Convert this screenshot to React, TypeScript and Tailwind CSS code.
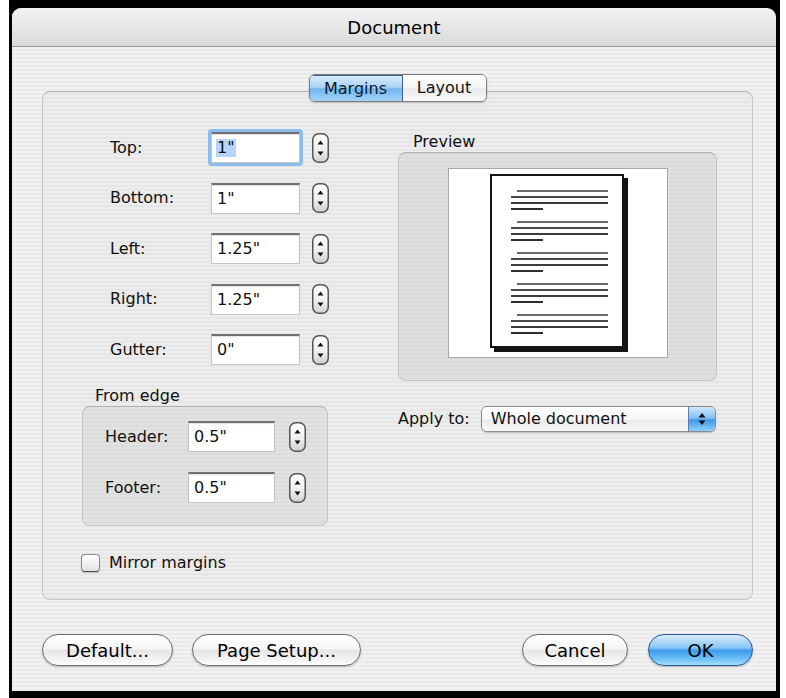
import React from 'react';

const stripes =
  'bg-[repeating-linear-gradient(to_bottom,#f1f1f1_0px,#f1f1f1_2px,#eaeaea_2px,#eaeaea_4px)]';

function Stepper() {
  return (
    <svg width="17" height="30" viewBox="0 0 17 30" className="shrink-0">
      <defs>
        <linearGradient id="stepper-fill" x1="0" y1="0" x2="0" y2="1">
          <stop offset="0" stopColor="#ffffff" />
          <stop offset="0.55" stopColor="#f0f0f0" />
          <stop offset="1" stopColor="#cfcfcf" />
        </linearGradient>
      </defs>
      <rect x="0.75" y="0.75" width="15.5" height="28.5" rx="6" fill="url(#stepper-fill)" stroke="#555" strokeWidth="1.5" />
      <path d="M8.5 7.5 L11.5 11.5 H5.5 Z" fill="#111" />
      <path d="M8.5 22.5 L11.5 18.5 H5.5 Z" fill="#111" />
    </svg>
  );
}

function Field({ value, className, focused }: { value: string; className: string; focused?: boolean }) {
  return (
    <div
      className={
        'h-[31px] shrink-0 bg-white border border-[#c4c4c4] border-t-[#707070] border-t-2 shadow-[inset_0_1px_1px_rgba(0,0,0,0.12)] flex items-center pl-[4px] ' +
        (focused ? 'outline-[3px] outline outline-[#8cbcec] rounded-[1px] ' : '') +
        className
      }
    >
      {focused ? <span className="bg-[#b5d5fc] px-[1px] leading-[18px]">{value}</span> : <span className="px-[1px]">{value}</span>}
    </div>
  );
}

function PushButton({ label, className, primary }: { label: string; className: string; primary?: boolean }) {
  return (
    <button
      className={
        'h-[32px] rounded-full border text-[18px] text-black flex items-center justify-center shadow-[0_1px_2px_rgba(0,0,0,0.25)] ' +
        (primary
          ? 'border-[#2d5797] bg-[linear-gradient(to_bottom,#d7ecfd_0%,#8ac6f5_42%,#3f9cec_52%,#6cc0f8_80%,#a6e0fd_100%)] '
          : 'border-[#6e6e6e] bg-[linear-gradient(to_bottom,#ffffff_0%,#f6f6f6_45%,#e6e6e6_52%,#f4f4f4_85%,#ffffff_100%)] ') +
        className
      }
    >
      {label}
    </button>
  );
}

const marginRows = [
  { label: 'Top:', value: '1"', focused: true },
  { label: 'Bottom:', value: '1"' },
  { label: 'Left:', value: '1.25"' },
  { label: 'Right:', value: '1.25"' },
  { label: 'Gutter:', value: '0"' },
];

const edgeRows = [
  { label: 'Header:', value: '0.5"' },
  { label: 'Footer:', value: '0.5"' },
];

function PagePreview() {
  return (
    <div className="w-[220px] h-[190px] bg-white border border-[#a8a8a8] pl-[41px] pt-[5px]">
      <div className="w-[134px] h-[174px] bg-white border-2 border-[#141414] shadow-[4px_4px_0_#141414] pt-[14px] pl-[19px] pr-[14px] flex flex-col gap-[11px]">
        {[0, 1, 2, 3, 4].map((i) => (
          <div key={i} className="flex flex-col gap-[4px]">
            <div className="ml-[6px] h-[2px] bg-[#6a6a6a]" />
            <div className="h-[2px] bg-[#4a4a4a]" />
            <div className="h-[2px] bg-[#3c3c3c]" />
            <div className="w-[32px] h-[2px] bg-[#2e2e2e]" />
          </div>
        ))}
      </div>
    </div>
  );
}

function Popup() {
  return (
    <div className="w-[235px] h-[26px] rounded-[6px] border border-[#8a8a8a] flex overflow-hidden shadow-[0_1px_1px_rgba(0,0,0,0.2)]">
      <div className="flex-1 flex items-center pl-[9px] bg-[linear-gradient(to_bottom,#ffffff_0%,#f7f7f7_50%,#ebebeb_55%,#f8f8f8_100%)]">
        Whole document
      </div>
      <div className="w-[27px] border-l border-[#5b7fb5] flex items-center justify-center bg-[linear-gradient(to_bottom,#cfe7fc_0%,#86c2f3_45%,#3d9bea_55%,#8fd0fb_100%)]">
        <svg width="10" height="16" viewBox="0 0 10 16">
          <path d="M5 2 L8.5 6.5 H1.5 Z" fill="#111" />
          <path d="M5 14 L8.5 9.5 H1.5 Z" fill="#111" />
        </svg>
      </div>
    </div>
  );
}

export default function App() {
  return (
    <div className="w-[786px] h-[698px] bg-white font-['DejaVu_Sans','Liberation_Sans',sans-serif] text-[16px] text-[#111]">
      <div className="ml-[9px] w-[771px] h-[698px] bg-black pt-[8px] pl-[3px] pr-[4px] pb-[7px] flex flex-col">
        <div className="flex-1 flex flex-col rounded-t-[9px] overflow-hidden shadow-[inset_2px_0_0_#bdbdbd]">
          {/* title bar */}
          <div className="h-[39px] shrink-0 border-b border-[#9a9a9a] bg-[linear-gradient(to_bottom,#f3f3f3,#e4e4e4_60%,#d8d8d8)] flex items-center justify-center text-[18px] text-black">
            Document
          </div>

          <div className={'flex-1 flex flex-col pt-[27px] pl-[30px] pr-[23px] ' + stripes}>
            {/* tabs */}
            <div className="relative z-10 flex justify-center">
              <div className="flex h-[28px] rounded-[6px] border border-[#7a7a7a] overflow-hidden shadow-[0_1px_2px_rgba(0,0,0,0.2)]">
                <div className="w-[93px] flex items-center justify-center border-r border-t border-[#3f5f96] bg-[linear-gradient(to_bottom,#d6ebfc_0%,#a9d2f6_45%,#72b5ee_52%,#a2d4f8_100%)] text-[#0e1a2c]">
                  Margins
                </div>
                <div className="w-[83px] flex items-center justify-center bg-[linear-gradient(to_bottom,#ffffff_0%,#f5f5f5_48%,#e8e8e8_54%,#fafafa_100%)]">
                  Layout
                </div>
              </div>
            </div>

            {/* tab pane */}
            <div className="-mt-[11px] h-[509px] rounded-[8px] border border-[#c6c6c6] border-t-[#b3b3b3] bg-black/[0.015] pl-[39px] pt-[40px] flex">
              <div className="w-[247px] flex flex-col">
                <div className="ml-[28px] flex flex-col gap-[19.5px]">
                  {marginRows.map((r) => (
                    <div key={r.label} className="flex items-center">
                      <span className="w-[102px]">{r.label}</span>
                      <Field value={r.value} focused={r.focused} className="w-[89px]" />
                      <div className="ml-[12px]">
                        <Stepper />
                      </div>
                    </div>
                  ))}
                </div>

                <div className="ml-[13px] mt-[21px] leading-[20px]">From edge</div>
                <div className="w-[246px] h-[120px] rounded-[8px] border border-[#c4c4c4] border-t-[#b0b0b0] bg-black/[0.045] pt-[14px] pl-[22px] flex flex-col gap-[20px]">
                  {edgeRows.map((r) => (
                    <div key={r.label} className="flex items-center">
                      <span className="w-[83px]">{r.label}</span>
                      <Field value={r.value} className="w-[87px]" />
                      <div className="ml-[14px]">
                        <Stepper />
                      </div>
                    </div>
                  ))}
                </div>

                <label className="mt-[28px] -ml-[1px] flex items-center gap-[9px]">
                  <span className="w-[19px] h-[18px] rounded-[4px] border border-[#8a8a8a] border-b-[#4f4f4f] bg-[linear-gradient(to_bottom,#ffffff,#f0f0f0_55%,#e0e0e0)] shadow-[0_1px_1px_rgba(0,0,0,0.2)]" />
                  <span className="leading-[18px]">Mirror margins</span>
                </label>
              </div>

              <div className="ml-[69px] flex flex-col">
                <div className="ml-[15px] leading-[20px]">Preview</div>
                <div className="w-[319px] h-[229px] rounded-[8px] border border-[#c4c4c4] border-t-[#b0b0b0] bg-black/[0.05] flex justify-center pt-[15px]">
                  <PagePreview />
                </div>
                <div className="mt-[25px] flex items-center gap-[11px]">
                  <span>Apply to:</span>
                  <Popup />
                </div>
              </div>
            </div>

            {/* dialog buttons */}
            <div className="mt-[34px] flex items-center">
              <PushButton label="Default..." className="w-[131px]" />
              <PushButton label="Page Setup..." className="w-[169px] ml-[19px]" />
              <div className="flex-1" />
              <PushButton label="Cancel" className="w-[106px]" />
              <PushButton label="OK" primary className="w-[105px] ml-[20px]" />
            </div>
          </div>
        </div>
      </div>
    </div>
  );
}
